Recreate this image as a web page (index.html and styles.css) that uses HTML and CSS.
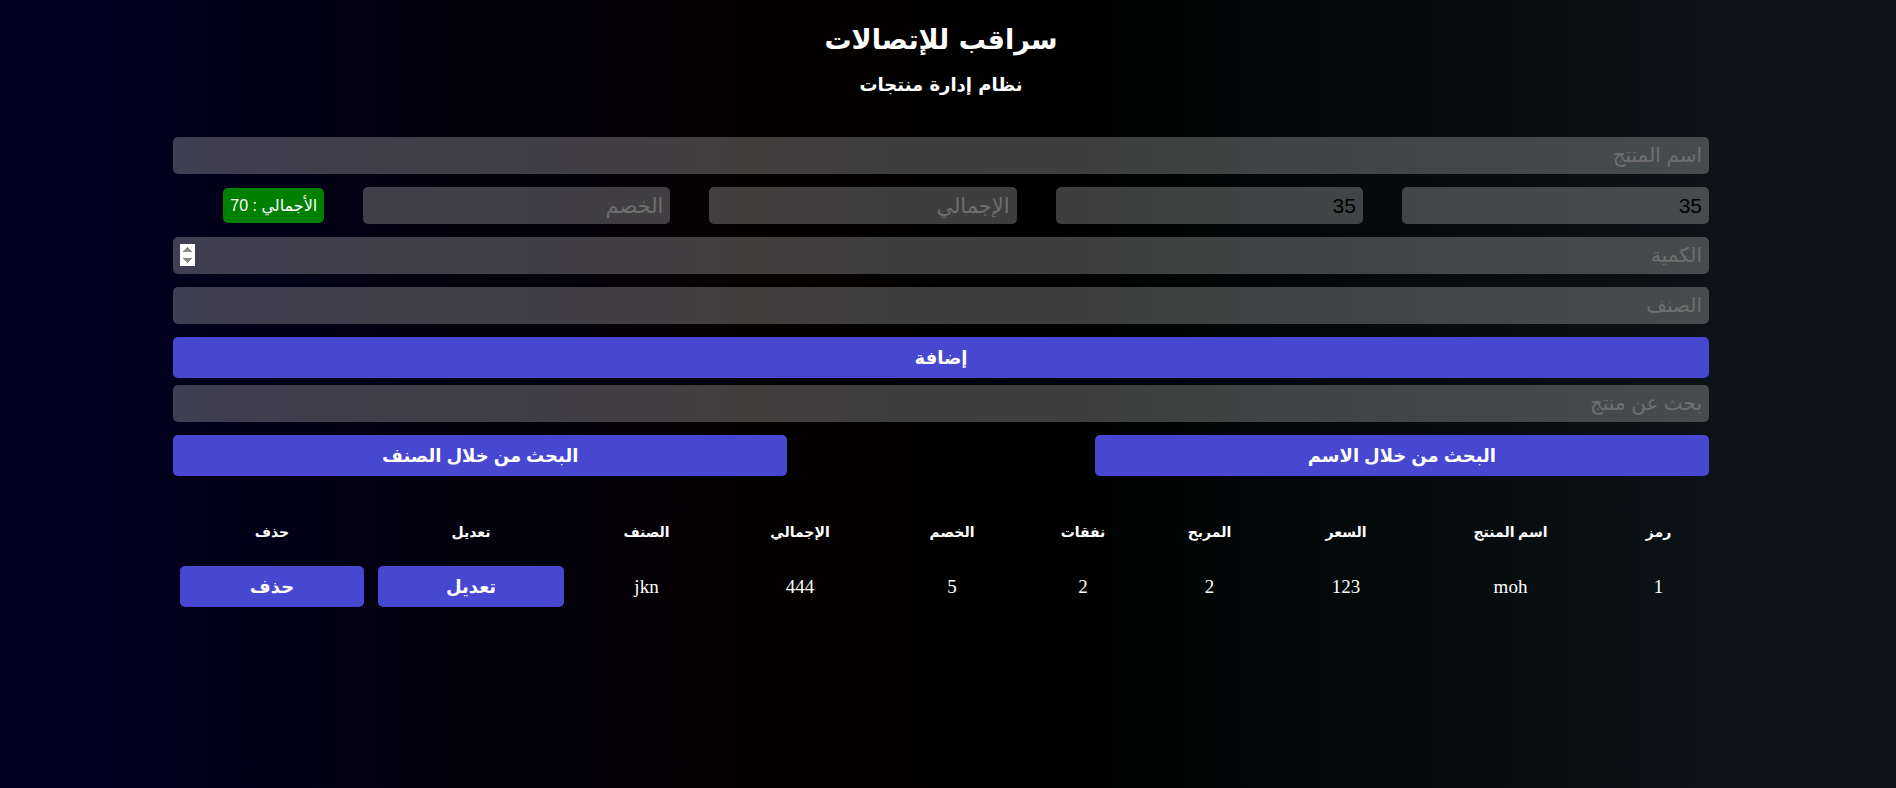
FILE: index.html
```html
<!DOCTYPE html>
<html lang="ar" dir="rtl">
<head>
<meta charset="utf-8">
<title>سراقب للإتصالات</title>
<link rel="stylesheet" href="styles.css">
</head>
<body>
<div class="crud">
  <header class="head">
    <h1 class="title">سراقب للإتصالات</h1>
    <h2 class="subtitle">نظام إدارة منتجات</h2>
  </header>

  <div class="form">
    <input type="text" class="field" placeholder="اسم المنتج">
    <div class="price">
      <input type="text" class="field field-price" value="35">
      <input type="text" class="field field-price" value="35">
      <input type="text" class="field field-price" placeholder="الإجمالي">
      <input type="text" class="field field-price" placeholder="الخصم">
      <small class="total">الأجمالي : 70</small>
    </div>
    <input type="number" class="field field-count" placeholder="الكمية">
    <input type="text" class="field" placeholder="الصنف">
    <button class="btn btn-add">إضافة</button>
  </div>

  <div class="search">
    <input type="text" class="field" placeholder="بحث عن منتج">
    <div class="search-btns">
      <button class="btn btn-search">البحث من خلال الاسم</button>
      <button class="btn btn-search">البحث من خلال الصنف</button>
    </div>
  </div>

  <table class="products">
    <colgroup>
      <col class="c-id">
      <col class="c-name">
      <col class="c-price">
      <col class="c-profit">
      <col class="c-taxes">
      <col class="c-discount">
      <col class="c-total">
      <col class="c-category">
      <col class="c-update">
      <col class="c-delete">
    </colgroup>
    <thead>
      <tr>
        <th>رمز</th>
        <th>اسم المنتج</th>
        <th>السعر</th>
        <th>المربح</th>
        <th>نفقات</th>
        <th>الخصم</th>
        <th>الإجمالي</th>
        <th>الصنف</th>
        <th>تعديل</th>
        <th>حذف</th>
      </tr>
    </thead>
    <tbody>
      <tr>
        <td>1</td>
        <td>moh</td>
        <td>123</td>
        <td>2</td>
        <td>2</td>
        <td>5</td>
        <td>444</td>
        <td>jkn</td>
        <td><button class="btn btn-row">تعديل</button></td>
        <td><button class="btn btn-row">حذف</button></td>
      </tr>
    </tbody>
  </table>
</div>
</body>
</html>
```

FILE: styles.css
```css
* {
  box-sizing: border-box;
  margin: 0;
  padding: 0;
}

html, body {
  height: 100%;
}

body {
  background: linear-gradient(90deg, #02001e 0%, #02001e 6%, #040200 40%, #000000 55%, #0b1316 90%, #0b1316 100%);
  color: #fff;
  font-family: "Liberation Serif", "DejaVu Sans", serif;
  padding: 0 187px 0 173px;
}

.head {
  text-align: center;
  padding-top: 20px;
}

.title {
  font-family: "DejaVu Sans", sans-serif;
  font-size: 27px;
  line-height: 40px;
  font-weight: bold;
}

.subtitle {
  font-family: "DejaVu Sans", sans-serif;
  font-size: 18px;
  line-height: 30px;
  font-weight: bold;
  margin-top: 10px;
}

.form {
  margin-top: 37px;
  display: flex;
  flex-direction: column;
  gap: 13px;
}

.field {
  display: block;
  width: 100%;
  height: 37px;
  border: none;
  outline: none;
  border-radius: 5px;
  background: rgba(255, 255, 255, 0.245);
  padding: 0 7px;
  font-family: "Liberation Sans", "DejaVu Sans", sans-serif;
  font-size: 20px;
  color: #000;
}

.field-price {
  font-size: 21px;
}

.field::placeholder {
  color: #6f6f6f;
}

.field-count::-webkit-inner-spin-button {
  opacity: 1;
}

.price {
  display: flex;
  align-items: center;
  gap: 39px;
}

.field-price {
  flex: none;
  width: 20%;
}

.total {
  flex: none;
  background: #008000;
  color: #fff;
  height: 35px;
  padding: 0 7px;
  border-radius: 5px;
  display: flex;
  align-items: center;
  font-family: "Liberation Sans", "DejaVu Sans", sans-serif;
  font-size: 16px;
}

.btn {
  border: none;
  outline: none;
  border-radius: 5px;
  background: #4747d1;
  color: #fff;
  font-family: "Liberation Sans", "DejaVu Sans", sans-serif;
  font-weight: bold;
  font-size: 18px;
  cursor: pointer;
}

.btn-add {
  height: 41px;
  width: 100%;
}

.search {
  margin-top: 7px;
  display: flex;
  flex-direction: column;
  gap: 13px;
}

.search-btns {
  display: flex;
  justify-content: space-between;
}

.btn-search {
  width: 40%;
  height: 41px;
}

.products {
  width: 100%;
  margin-top: 36px;
  border-collapse: collapse;
  table-layout: fixed;
}

.c-id { width: 101px; }
.c-name { width: 195px; }
.c-price { width: 134px; }
.c-profit { width: 139px; }
.c-taxes { width: 114px; }
.c-discount { width: 148px; }
.c-total { width: 156px; }
.c-category { width: 151px; }
.c-update { width: 200px; }
.c-delete { width: 198px; }

.products th {
  height: 40px;
  font-size: 14px;
  font-weight: bold;
  text-align: center;
  vertical-align: middle;
}

.products td {
  padding: 14px 7px 0;
  font-size: 19px;
  text-align: center;
  vertical-align: middle;
}

.btn-row {
  display: block;
  width: 100%;
  height: 41px;
  font-size: 18px;
}
```
